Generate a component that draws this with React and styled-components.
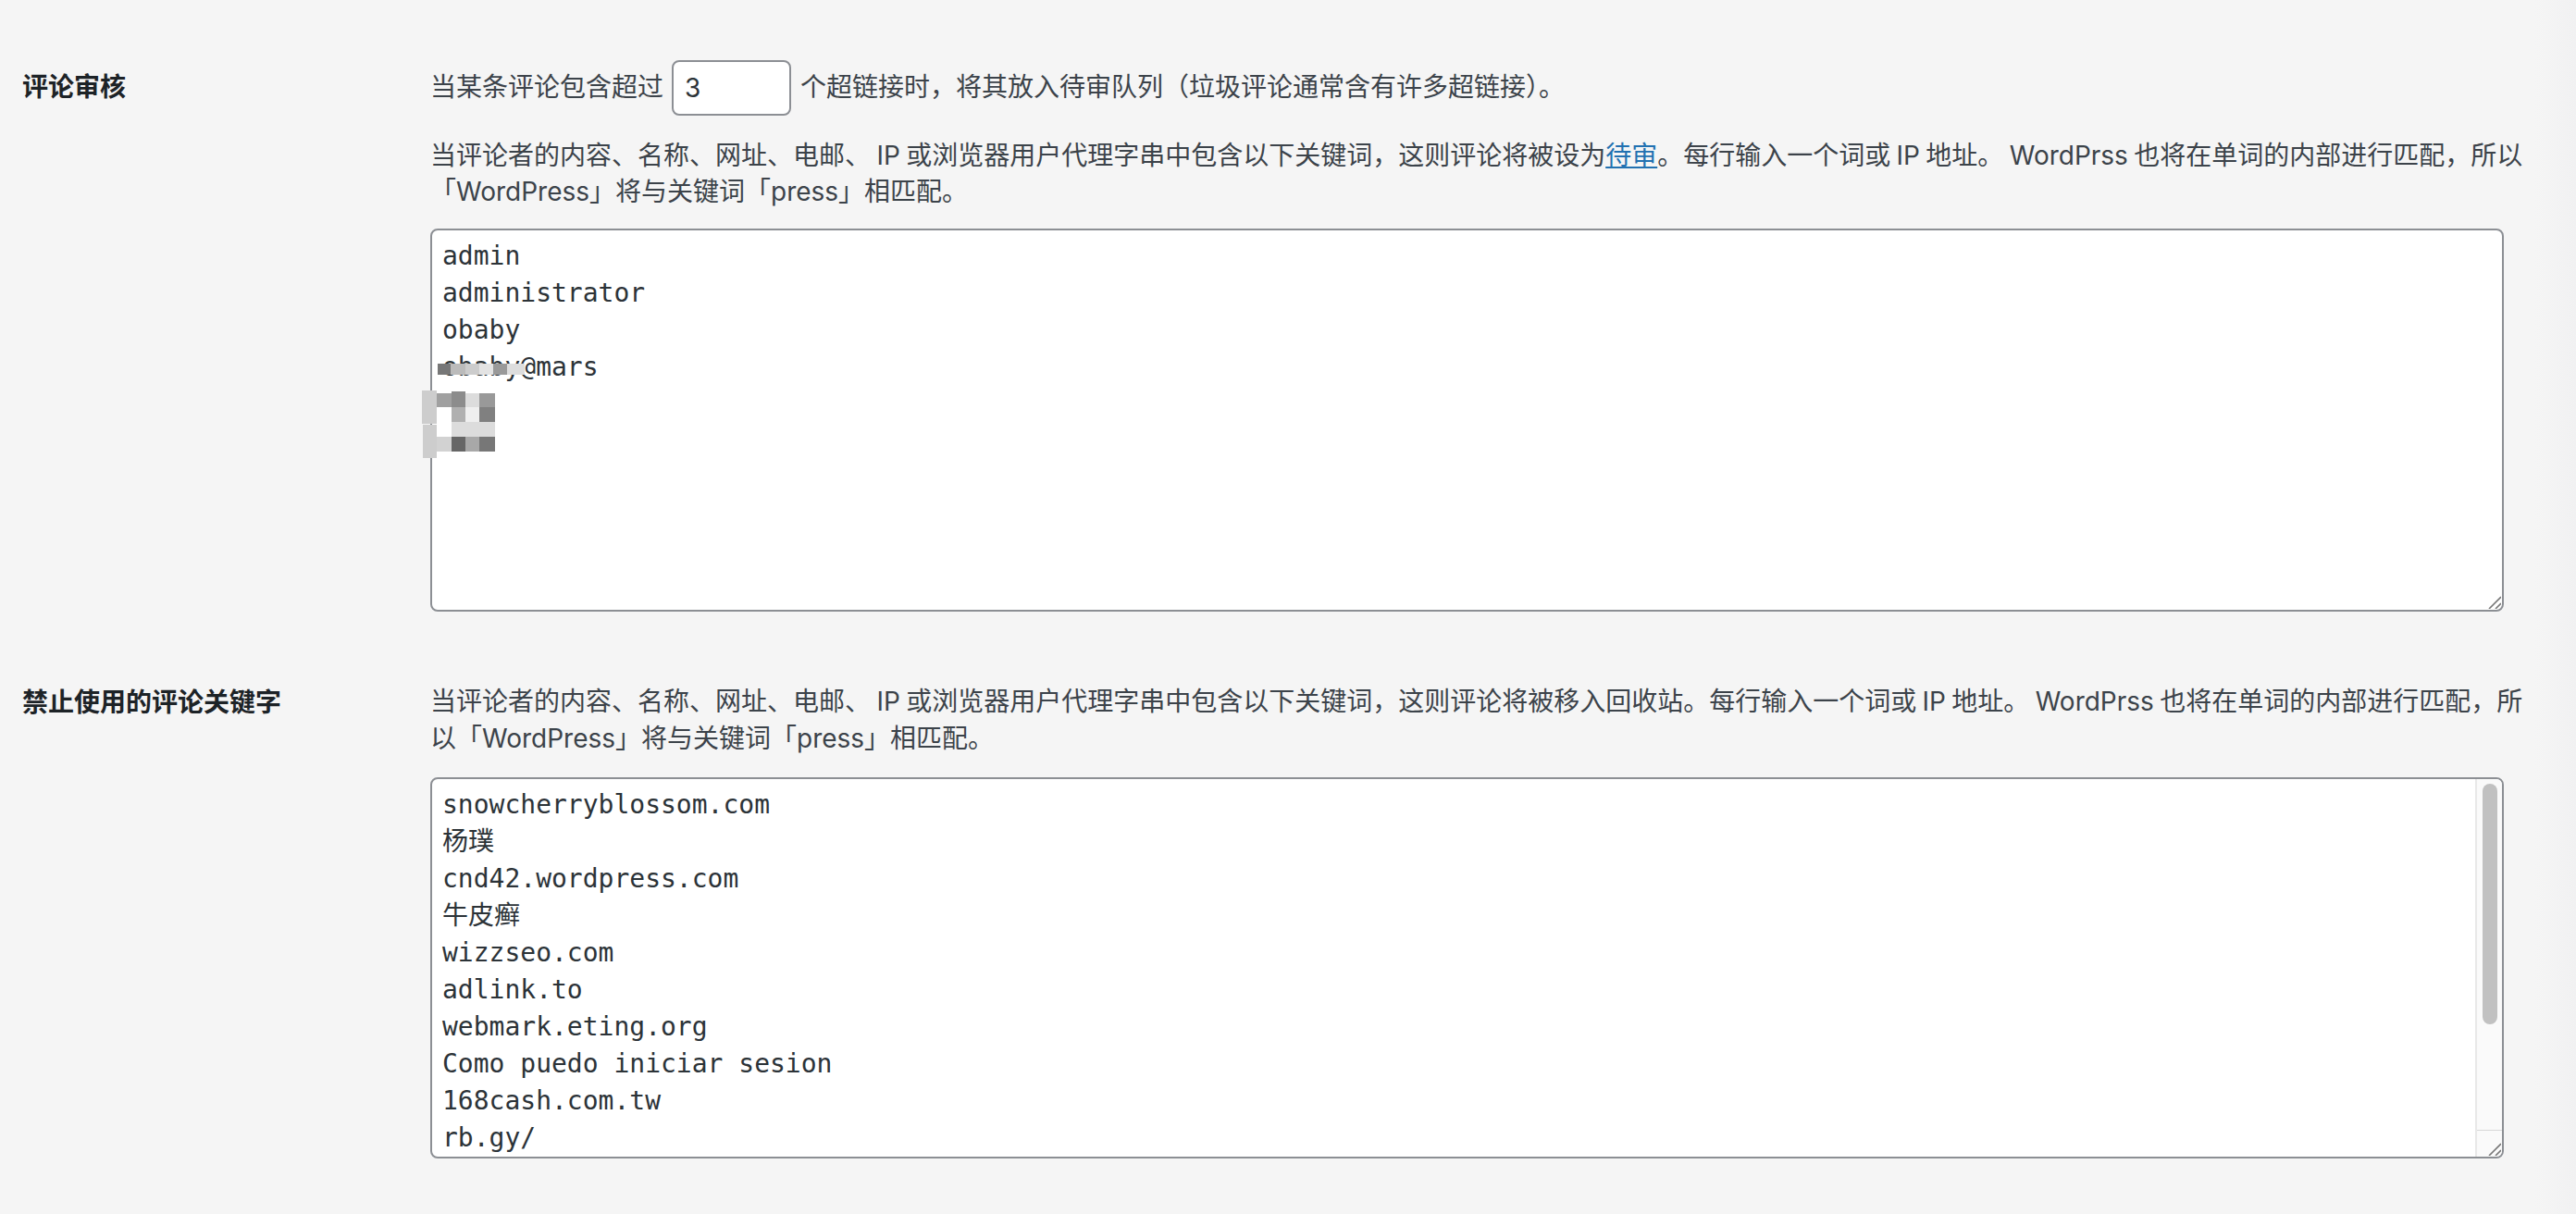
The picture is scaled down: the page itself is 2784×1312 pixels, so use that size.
import React from "react";
import styled, { createGlobalStyle } from "styled-components";

const GlobalStyle = createGlobalStyle`
  html, body {
    margin: 0;
    height: 100%;
    overflow: hidden;
    background: linear-gradient(90deg, #f5f5f5 0, #f5f5f5 2740px, #f1f1f2 2784px);
  }
`;

const Page = styled.div`
  padding: 65px 0 0 25px;
  font-family: Inter, "Noto Sans CJK SC", sans-serif;
  font-size: 28px;
  line-height: 39.2px;
  color: #3c434a;
`;

const Row = styled.section`
  display: grid;
  grid-template-columns: 440px 2280px;
  margin-bottom: ${(p) => p.$gap || 0}px;
`;

const Label = styled.h3`
  margin: ${(p) => p.$top || 0}px 0 0 -1px;
  font-size: 28px;
  line-height: 39.2px;
  font-weight: 600;
  color: #1d2327;
`;

const Field = styled.div`
  min-width: 0;
`;

const InlineLine = styled.div`
  display: flex;
  align-items: center;
  gap: 9px;
  height: 60px;
`;

const NumberInput = styled.input`
  box-sizing: border-box;
  width: 129px;
  height: 60px;
  margin-right: 1px;
  padding: 0 12px;
  border: 2px solid #8c8f94;
  border-radius: 8px;
  background: #fff;
  font: 28px/40px Inter, sans-serif;
  color: #2c3338;
  outline: none;
`;

const Note = styled.p`
  margin: ${(p) => p.$top || 0}px 0 ${(p) => p.$bottom || 0}px;
  word-spacing: -1.5px;
`;

const Link = styled.a`
  color: #2271b1;
  text-decoration: underline;
`;

const BoxWrap = styled.div`
  position: relative;
  width: 2241px;
`;

const KeywordBox = styled.textarea`
  display: block;
  box-sizing: border-box;
  width: 100%;
  height: ${(p) => p.$height}px;
  margin: 0;
  padding: 8px 11px;
  border: 2px solid #8c8f94;
  border-radius: 8px;
  background: #fff;
  font-family: "DejaVu Sans Mono", "Noto Sans CJK SC", monospace;
  font-size: 28px;
  line-height: 40px;
  color: #2c3338;
  outline: none;
  resize: none;
  overflow: hidden;
`;

// headless chrome hides native scrollbars, so the bar is drawn over the box
const ScrollTrack = styled.div`
  position: absolute;
  top: 2px;
  right: 2px;
  bottom: 2px;
  box-sizing: border-box;
  width: 29px;
  display: flex;
  flex-direction: column;
  background: #fafafa;
  border-left: 2px solid #e8e8e8;
  border-radius: 0 6px 6px 0;
`;

const ScrollThumb = styled.div`
  width: 16px;
  height: 260px;
  margin: 5px 0 0 6px;
  border-radius: 8px;
  background: #c1c1c1;
`;

const ScrollCorner = styled.div`
  height: 29px;
  margin-top: auto;
  box-sizing: border-box;
  border-top: 1px solid #d8d8d8;
`;

const Grip = styled.svg`
  position: absolute;
  right: 3px;
  bottom: 3px;
  width: 16px;
  height: 16px;
`;

const ResizeGrip = () => (
  <Grip viewBox="0 0 16 16" aria-hidden="true">
    <path d="M3 16 16 3M10 16l6-6" fill="none" stroke="#777" strokeWidth="1.6" />
  </Grip>
);

const Mosaic = styled.svg`
  position: absolute;
  left: -9px;
  top: 146px;
  width: 111px;
  height: 102px;
  filter: blur(0.6px);
  pointer-events: none;
`;

// redaction patches: x, y, w, h, fill (svg coords start at 456,393 on the page)
const patches = [
  [17, 0, 14, 12, "#777"], [31, 0, 16, 12, "#bbb"], [47, 0, 15, 12, "#ccc"],
  [62, 0, 15, 12, "#e3e3e3"], [77, 0, 15, 12, "#999"], [92, 0, 19, 12, "#ddd"],
  [0, 29, 16, 36, "#cdcdcd"], [1, 66, 15, 36, "#cdcdcd"],
  [16, 32, 16, 15, "#a0a0a0"], [32, 30, 15, 17, "#8c8c8c"], [47, 32, 15, 15, "#dcdcdc"], [62, 32, 17, 15, "#999"],
  [16, 47, 16, 16, "#fff"], [32, 47, 15, 16, "#b0b0b0"], [47, 47, 15, 16, "#efefef"], [62, 47, 17, 16, "#808080"],
  [16, 63, 16, 16, "#fff"], [32, 63, 47, 16, "#dcdcdc"],
  [16, 79, 16, 16, "#d2d2d2"], [32, 79, 15, 16, "#666"], [47, 79, 15, 16, "#a8a8a8"], [62, 79, 17, 16, "#777"],
];

const moderationWords = ["admin", "administrator", "obaby", "obaby@mars"].join("\n");

const blockedWords = [
  "snowcherryblossom.com",
  "杨璞",
  "cnd42.wordpress.com",
  "牛皮癣",
  "wizzseo.com",
  "adlink.to",
  "webmark.eting.org",
  "Como puedo iniciar sesion",
  "168cash.com.tw",
  "rb.gy/",
].join("\n");

const App = () => (
  <>
    <GlobalStyle />
    <Page>
      <Row $gap={77}>
        <Label $top={10}>评论审核</Label>
        <Field>
          <InlineLine>
            <span>当某条评论包含超过</span>
            <NumberInput type="number" defaultValue={3} />
            <span>个超链接时，将其放入待审队列（垃圾评论通常含有许多超链接）。</span>
          </InlineLine>
          <Note $top={24} $bottom={20}>
            当评论者的内容、名称、网址、电邮、 IP 或浏览器用户代理字串中包含以下关键词，这则评论将被设为<Link href="#">待审</Link>。每行输入一个词或 IP 地址。 WordPrss 也将在单词的内部进行匹配，所以「WordPress」将与关键词「press」相匹配。
          </Note>
          <BoxWrap>
            <KeywordBox $height={414} spellCheck={false} defaultValue={moderationWords} />
            <ResizeGrip />
            <Mosaic viewBox="0 0 111 102" aria-hidden="true">
              {patches.map(([x, y, w, h, fill], i) => (
                <rect key={i} x={x} y={y} width={w} height={h} fill={fill} />
              ))}
            </Mosaic>
          </BoxWrap>
        </Field>
      </Row>
      <Row>
        <Label $top={2}>禁止使用的评论关键字</Label>
        <Field>
          <Note $top={1} $bottom={22}>
            当评论者的内容、名称、网址、电邮、 IP 或浏览器用户代理字串中包含以下关键词，这则评论将被移入回收站。每行输入一个词或 IP 地址。 WordPrss 也将在单词的内部进行匹配，所以「WordPress」将与关键词「press」相匹配。
          </Note>
          <BoxWrap>
            <KeywordBox $height={412} spellCheck={false} defaultValue={blockedWords} />
            <ScrollTrack>
              <ScrollThumb />
              <ScrollCorner />
            </ScrollTrack>
            <ResizeGrip />
          </BoxWrap>
        </Field>
      </Row>
    </Page>
  </>
);

export default App;
